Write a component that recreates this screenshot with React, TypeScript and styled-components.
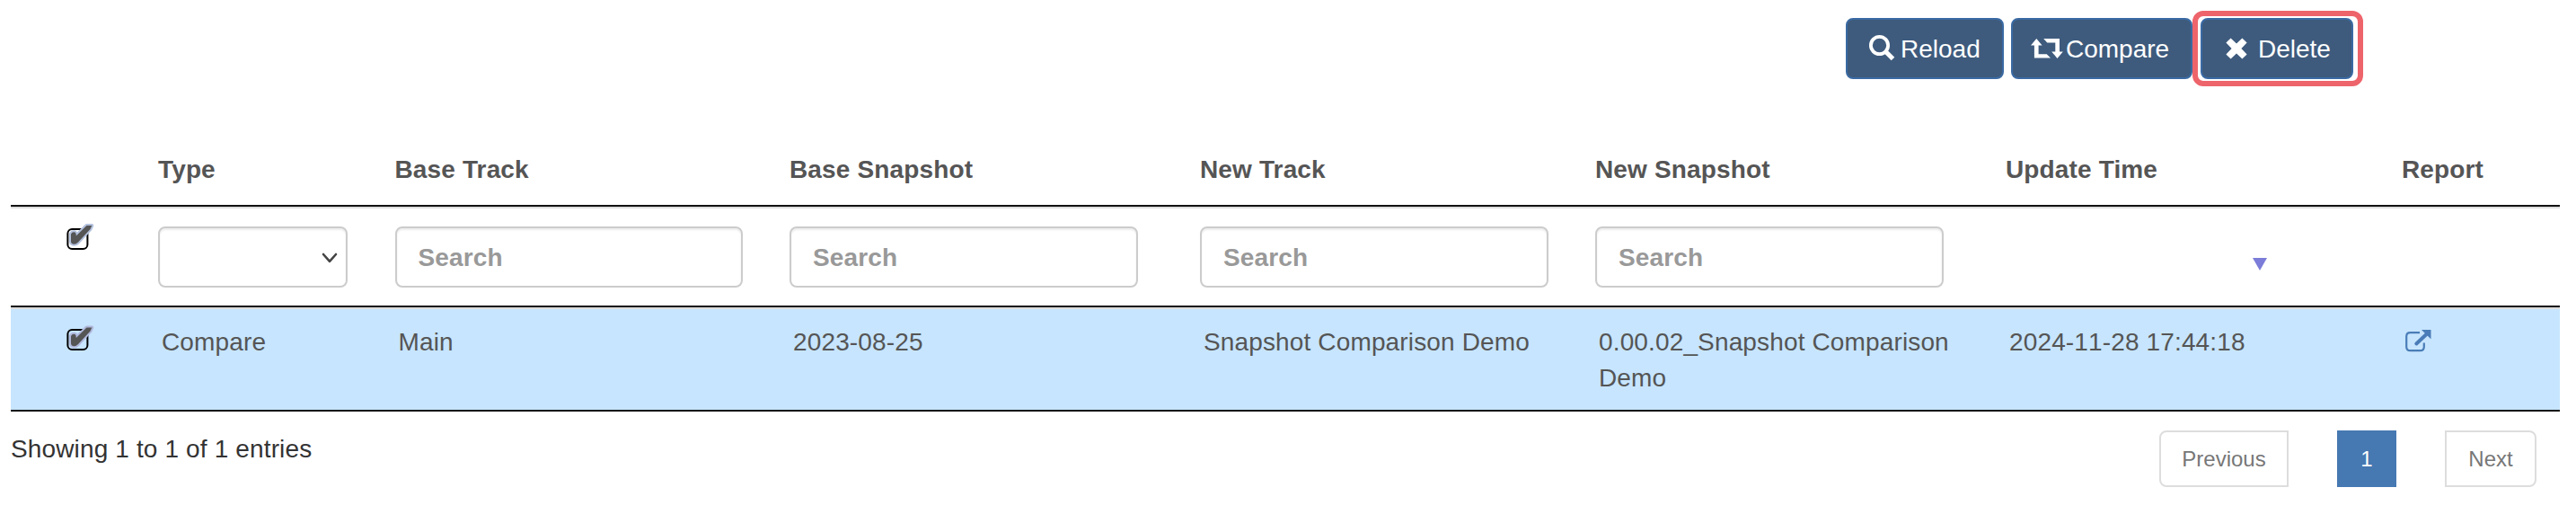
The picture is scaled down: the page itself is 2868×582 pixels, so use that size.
import React from "react";
import styled, { createGlobalStyle } from "styled-components";

const GlobalStyle = createGlobalStyle`
  * { box-sizing: border-box; }
  body {
    margin: 0;
    background: #fff;
    color: #333;
    font-family: "Liberation Sans", Arial, sans-serif;
    font-size: 28px;
    line-height: 40px;
    letter-spacing: 0.14px;
  }
`;

const Page = styled.main`
  height: 582px;
  padding: 12px 18px 0 12px;
  overflow: hidden;
`;

const Toolbar = styled.div`
  display: flex;
  justify-content: flex-end;
  align-items: center;
  height: 84px;
  padding-right: 219px;
`;

const Button = styled.button<{ $width: number; $left: number }>`
  display: flex;
  align-items: center;
  width: ${(p) => p.$width}px;
  height: 68px;
  margin: 0 8px 0 0;
  padding: 0 0 0 ${(p) => p.$left}px;
  border: 2px solid #3a6aa3;
  border-radius: 8px;
  background: #3e5b7d;
  color: #fff;
  font: inherit;
  white-space: nowrap;
`;

const Highlight = styled.div`
  width: 190px;
  height: 84px;
  margin-left: -8px;
  padding: 2px 3px;
  border: 6px solid #ee646b;
  border-radius: 12px;
`;

const ButtonLabel = styled.span<{ $gap: number }>`
  margin-left: ${(p) => p.$gap}px;
  padding-top: 2px;
`;

const Table = styled.div`
  margin-top: 62px;
  color: #555;
`;

const Row = styled.div`
  display: grid;
  grid-template-columns: 148px 263.5px 439.5px 457px 440px 457px 441px 1fr;
  border-bottom: 2px solid #111;
`;

const HeadRow = styled(Row)`
  height: 72px;
  padding-top: 11px;
  font-weight: bold;
`;

const FilterRow = styled(Row)`
  height: 112px;
  border-top: 2px solid #ddd;
  font-weight: bold;
`;

const DataRow = styled(Row)`
  height: 116px;
  border-top: 2px solid #ddd;
  background: #c7e5fe;
`;

const HeadCell = styled.div`
  padding-left: 16px;
`;

const FilterCell = styled.div`
  padding: 20px 0 0 16px;
`;

const DataCell = styled.div`
  padding: 17px 16px 0 20px;
  font-kerning: none;
`;

const CheckCell = styled.div`
  padding: 17px 0 0 60px;
  line-height: 0;
`;

const Field = styled.div<{ $width?: number }>`
  display: flex;
  align-items: center;
  width: ${(p) => p.$width ?? 387.5}px;
  height: 68px;
  padding: 2px 9px 0 24px;
  border: 2px solid #ccc;
  border-radius: 8px;
  background: #fff;
  box-shadow: inset 0 2px 2px rgba(0, 0, 0, 0.075);
  color: #999;
`;

const SelectField = styled(Field)`
  justify-content: flex-end;
`;

const SortCell = styled.div`
  padding: 55px 0 0 291px;
  line-height: 0;
`;

const LinkCell = styled.div`
  padding: 23px 0 0 20px;
  line-height: 0;
`;

const Footer = styled.footer`
  display: flex;
  justify-content: space-between;
  padding: 21px 26px 0 0;
`;

const Info = styled.div`
  height: 40px;
  margin-top: 1px;
`;

const Pager = styled.nav`
  display: flex;
  gap: 54px;
  font-size: 24px;
  letter-spacing: 0;
`;

const PageLink = styled.a<{ $width: number; $side?: "start" | "end" }>`
  display: flex;
  align-items: center;
  justify-content: center;
  width: ${(p) => p.$width}px;
  height: 63px;
  border: 2px solid #ddd;
  border-radius: ${(p) => (p.$side === "start" ? "8px 0 0 8px" : "0 8px 8px 0")};
  color: #777;
`;

const CurrentPage = styled(PageLink)`
  border-color: #4678b2;
  border-radius: 0;
  background: #4678b2;
  color: #fff;
`;

const SearchIcon = () => (
  <svg width="29" height="30" viewBox="0 0 29 30" fill="none" stroke="#fff">
    <circle cx="11.5" cy="11.5" r="9.6" strokeWidth="3.8" />
    <path d="M18 18L26.500 26.500" strokeWidth="5.200" />
  </svg>
);

const CompareIcon = () => (
  <svg width="36" height="22" viewBox="0 0 36 22" fill="#fff">
    <path d="M6.300 0L12.600 7.500H8.600V17.300H17.700L22 21.500H3.900V7.500H0Z" />
    <path d="M29.500 22L23.200 14.400H27.300V4.400H18.300L14.200 0H32V14.400H35.800Z" />
  </svg>
);

const RemoveIcon = () => (
  <svg width="24" height="25" viewBox="0 0 24 25" fill="#fff">
    <path d="M5.6 .4L12 6.6L18.4 .4L23.6 5.6L17.4 12L23.6 18.4L18.4 23.6L12 17.4L5.6 23.6L.4 18.4L6.6 12L.4 5.6Z" />
  </svg>
);

const CheckedBox = ({ tint, drop = 0 }: { tint: string; drop?: number }) => (
  <svg width="34" height="32" viewBox="0 0 34 32">
    <rect x="3.400" y="6" width="22" height="22" rx="4.800" fill="none" stroke="#000" strokeWidth="2" />
    <path
      transform={`translate(0 ${drop})`}
      d="M7 11.500Q8.500 8.500 11.500 9.500Q13 10.300 12.800 13.500L24.500 2H30.300L28.500 6L15 20.500Q11.500 24 8 22Q6.800 21 7 18.500Z"
      fill="#555"
      stroke={tint}
      strokeWidth="4"
      strokeLinejoin="round"
      paintOrder="stroke"
    />
  </svg>
);

const Chevron = () => (
  <svg width="18" height="12" viewBox="0 0 18 12" fill="none" stroke="#444" strokeWidth="2.600" strokeLinecap="round" strokeLinejoin="round">
    <path d="M2 2L9 9.800L16 2" />
  </svg>
);

const SortIcon = () => (
  <svg width="16" height="14" viewBox="0 0 16 14">
    <path d="M0 0H16L8 14Z" fill="#7c7cd9" />
  </svg>
);

const OpenIcon = () => (
  <svg width="29" height="25" viewBox="0 0 29 25">
    <path d="M16 3.200H5.500Q1.200 3.200 1.200 7.500V19Q1.200 23.200 5.500 23.200H16.500Q20.800 23.200 20.800 19V14.500" fill="none" stroke="#4a7db8" strokeWidth="2.200" />
    <path d="M12.300 15.500L24 4.500" stroke="#4a7db8" strokeWidth="4" strokeLinecap="round" />
    <path d="M18 0H28.500V10.300L25 7L21.500 3.500Z" fill="#4a7db8" />
  </svg>
);

const headings = ["", "Type", "Base Track", "Base Snapshot", "New Track", "New Snapshot", "Update Time", "Report"];
const values = ["Compare", "Main", "2023-08-25", "Snapshot Comparison Demo", "0.00.02_Snapshot Comparison Demo", "2024-11-28 17:44:18"];
const searchable = ["baseTrack", "baseSnapshot", "newTrack", "newSnapshot"];

export default function App() {
  return (
    <>
      <GlobalStyle />
      <Page>
        <Toolbar>
          <Button $width={176} $left={24}>
            <SearchIcon />
            <ButtonLabel $gap={6}>Reload</ButtonLabel>
          </Button>
          <Button $width={202} $left={20}>
            <CompareIcon />
            <ButtonLabel $gap={3}>Compare</ButtonLabel>
          </Button>
          <Highlight>
            <Button $width={170} $left={26}>
              <RemoveIcon />
              <ButtonLabel $gap={12}>Delete</ButtonLabel>
            </Button>
          </Highlight>
        </Toolbar>
        <Table>
          <HeadRow>
            {headings.map((h) => (
              <HeadCell key={h}>{h}</HeadCell>
            ))}
          </HeadRow>
          <FilterRow>
            <CheckCell>
              <CheckedBox tint="#b3c1de" />
            </CheckCell>
            <FilterCell>
              <SelectField $width={211}>
                <Chevron />
              </SelectField>
            </FilterCell>
            {searchable.map((f) => (
              <FilterCell key={f}>
                <Field>Search</Field>
              </FilterCell>
            ))}
            <SortCell>
              <SortIcon />
            </SortCell>
          </FilterRow>
          <DataRow>
            <CheckCell>
              <CheckedBox tint="#b0b8dc" drop={1.5} />
            </CheckCell>
            {values.map((v) => (
              <DataCell key={v}>{v}</DataCell>
            ))}
            <LinkCell>
              <OpenIcon />
            </LinkCell>
          </DataRow>
        </Table>
        <Footer>
          <Info>Showing 1 to 1 of 1 entries</Info>
          <Pager>
            <PageLink $width={144} $side="start">Previous</PageLink>
            <CurrentPage $width={66}>1</CurrentPage>
            <PageLink $width={102} $side="end">Next</PageLink>
          </Pager>
        </Footer>
      </Page>
    </>
  );
}
